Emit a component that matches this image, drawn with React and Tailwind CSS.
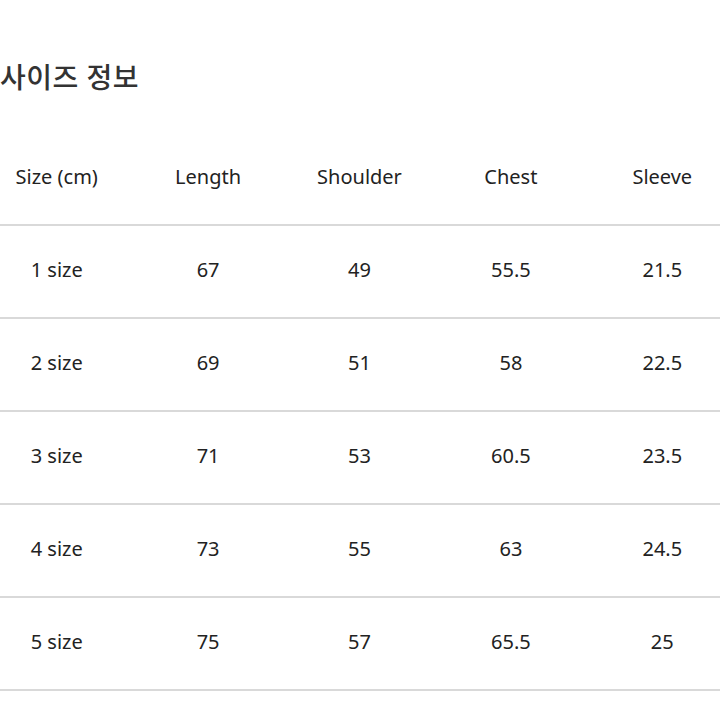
const headers = ["Size (cm)", "Length", "Shoulder", "Chest", "Sleeve"];

const rows = [
  ["1 size", "67", "49", "55.5", "21.5"],
  ["2 size", "69", "51", "58", "22.5"],
  ["3 size", "71", "53", "60.5", "23.5"],
  ["4 size", "73", "55", "63", "24.5"],
  ["5 size", "75", "57", "65.5", "25"],
];

export default function App() {
  return (
    <div
      className="w-[720px] h-[720px] overflow-hidden bg-white text-[#222]"
      style={{ fontFamily: '"Noto Sans", "Noto Sans CJK KR", sans-serif' }}
    >
      <h2 className="h-[132px] pt-[57px] pl-0 text-[28px] font-medium leading-[40px] text-[#333] tracking-[0.5px]">
        사이즈 정보
      </h2>

      <div className="w-[720px]">
        <div className="-ml-[19px] w-[757px] grid grid-cols-5 h-[92px] items-center text-center text-[20px] leading-none pb-[2px]">
          {headers.map((h) => (
            <div key={h}>{h}</div>
          ))}
        </div>
        {rows.map((r) => (
          <div key={r[0]} className="border-t-2 border-[#d9d9d9]">
            <div className="-ml-[19px] w-[757px] grid grid-cols-5 h-[91px] items-center text-center text-[20px] leading-none pb-[4px]">
              {r.map((c, i) => (
                <div key={i}>{c}</div>
              ))}
            </div>
          </div>
        ))}
        <div className="border-t-2 border-[#d9d9d9]" />
      </div>
    </div>
  );
}
